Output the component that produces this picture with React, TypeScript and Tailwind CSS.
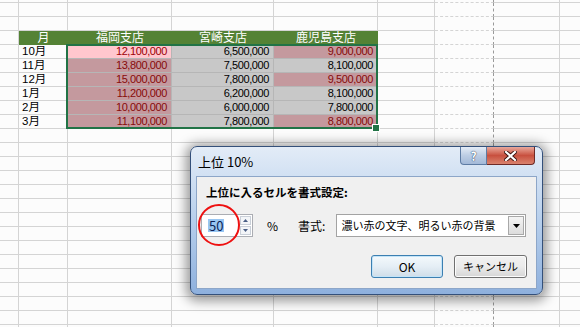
const COL_W = ['w-[19px]', 'w-[49px]', 'w-[104px]', 'w-[102px]', 'w-[104px]', 'w-[57px]', 'w-[59px]', 'w-[66px]', 'w-[40px]'];

type Cell = { v: string; hl: boolean };
type Row = { month: string; cells: Cell[] };

const headers = ['福岡支店', '宮崎支店', '鹿児島支店'];

const data: Row[] = [
  { month: '10月', cells: [{ v: '12,100,000', hl: true }, { v: '6,500,000', hl: false }, { v: '9,000,000', hl: true }] },
  { month: '11月', cells: [{ v: '13,800,000', hl: true }, { v: '7,500,000', hl: false }, { v: '8,100,000', hl: false }] },
  { month: '12月', cells: [{ v: '15,000,000', hl: true }, { v: '7,800,000', hl: false }, { v: '9,500,000', hl: true }] },
  { month: '1月', cells: [{ v: '11,200,000', hl: true }, { v: '6,200,000', hl: false }, { v: '8,100,000', hl: false }] },
  { month: '2月', cells: [{ v: '10,000,000', hl: true }, { v: '6,000,000', hl: false }, { v: '7,800,000', hl: false }] },
  { month: '3月', cells: [{ v: '11,100,000', hl: true }, { v: '7,800,000', hl: false }, { v: '8,800,000', hl: true }] },
];

const grid = 'border-r border-b border-[#d4d4d4]';

// column 6 ends on the page break
const emptyCell = (i: number) => (
  <div
    key={i}
    className={`${COL_W[i]} h-full shrink-0 ${
      i === 6 ? 'border-r border-b border-b-[#d4d4d4] border-r-[#9a9a9a] border-dashed border-b-solid' : grid
    }`}
  />
);

const EmptyRow = ({ h }: { h: string }) => (
  <div className={`flex ${h}`}>{COL_W.map((_, i) => emptyCell(i))}</div>
);

const HeaderRow = () => (
  <div className="flex h-[14px]">
    {emptyCell(0)}
    <div className={`${COL_W[1]} shrink-0 bg-[#548235] text-center text-[12px] leading-[14px] text-white`}>月</div>
    {headers.map((h, i) => (
      <div key={h} className={`${COL_W[i + 2]} shrink-0 bg-[#548235] text-center text-[12px] leading-[14px] text-white`}>
        {h}
      </div>
    ))}
    {[5, 6, 7, 8].map((i) => emptyCell(i))}
  </div>
);

const DataRow = ({ row, first }: { row: Row; first: boolean }) => (
  <div className="flex h-[14px]">
    {emptyCell(0)}
    <div className={`${COL_W[1]} shrink-0 ${grid} pl-[3px] text-[11.5px] leading-[13px] text-black`}>{row.month}</div>
    {row.cells.map((c, i) => {
      const active = first && i === 0;
      const bg = active ? 'bg-[#ffc7ce] text-[#9c0006]' : c.hl ? 'bg-[#c4999e] text-[#870a0a]' : 'bg-[#c8c8c8] text-black';
      return (
        <div
          key={i}
          className={`${COL_W[i + 2]} shrink-0 border-r border-b border-[#b6b6b6] ${bg} pr-[4px] text-right text-[11px] leading-[13px] tracking-[-0.4px]`}
        >
          {c.v}
        </div>
      );
    })}
    {[5, 6, 7, 8].map((i) => emptyCell(i))}
  </div>
);

const TitleButtons = () => (
  <div className="absolute right-[2px] top-0 flex">
    <div className="flex h-[18px] w-[27px] items-center justify-center rounded-bl-[4px] border border-t-0 border-[#5d7ba3] bg-gradient-to-b from-[#e4ecf6] via-[#bccde4] to-[#a3b9d8]">
      <span className="text-[12px] font-bold leading-none text-white [text-shadow:0_0_1px_#2a3f5f,0_0_1px_#2a3f5f]">?</span>
    </div>
    <div className="flex h-[18px] w-[48px] items-center justify-center rounded-br-[4px] border border-l-0 border-t-0 border-[#6e2a26] bg-gradient-to-b from-[#e8a89c] via-[#c8503f] to-[#d9826e]">
      <svg width="13" height="10" viewBox="0 0 13 10">
        <path d="M2 1 L11 9 M11 1 L2 9" stroke="#3b1410" strokeWidth="4" strokeLinecap="square" />
        <path d="M2 1 L11 9 M11 1 L2 9" stroke="#ffffff" strokeWidth="2.2" strokeLinecap="square" />
      </svg>
    </div>
  </div>
);

const Dialog = () => (
  <div className="absolute left-[190px] top-[146px] flex h-[149px] w-[353px] flex-col rounded-[7px] border border-[#34507a] bg-gradient-to-b from-[#e3ecf7] via-[#b7cfec] to-[#8eb0dd] px-[5px] pb-[5px] font-['Noto_Sans_CJK_JP',sans-serif] shadow-[0_2px_12px_4px_rgba(0,0,0,0.4)]">
    <div className="relative flex h-[29px] shrink-0 items-center pl-[2px] text-[13px] text-black">
      上位 10%
      <TitleButtons />
    </div>
    <div className="flex flex-1 flex-col border border-[#8da6c8] bg-[#f0f0f0] text-[11px] text-black">
      <div className="ml-[9px] mt-[7px] h-[16px] text-[11.5px] font-bold leading-[16px]">上位に入るセルを書式設定:</div>
      <div className="ml-[4px] mt-[14px] flex h-[23px] items-center">
        <div className="flex h-[23px] w-[52px] items-center border border-[#abadb3] bg-white">
          <div className="flex flex-1 pl-[6px]">
            <span className="bg-[#99c6f2] px-[1px] text-[13px] leading-[13px] text-[#0b1f55]">50</span>
          </div>
          <div className="mr-[1px] flex h-[19px] w-[11px] flex-col gap-[1px]">
            <div className="flex flex-1 items-center justify-center border border-[#c9cfd8] bg-[#f3f5f8]">
              <svg width="5" height="3" viewBox="0 0 5 3"><path d="M0 3 L2.5 0 L5 3 Z" fill="#4a5e85" /></svg>
            </div>
            <div className="flex flex-1 items-center justify-center border border-[#c9cfd8] bg-[#f3f5f8]">
              <svg width="5" height="3" viewBox="0 0 5 3"><path d="M0 0 L2.5 3 L5 0 Z" fill="#4a5e85" /></svg>
            </div>
          </div>
        </div>
        <span className="ml-[14px] text-[12px]">%</span>
        <span className="ml-[20px] text-[12px]">書式:</span>
        <div className="ml-[11px] flex h-[23px] w-[190px] items-center border border-[#a3a3a3] bg-white pl-[4px]">
          <span className="flex-1 text-[11px]">濃い赤の文字、明るい赤の背景</span>
          <div className="mr-[1px] flex h-[19px] w-[16px] items-center justify-center border border-[#a8a8a8] bg-gradient-to-b from-[#f4f4f4] to-[#dcdcdc]">
            <svg width="7" height="4" viewBox="0 0 7 4"><path d="M0 0 L7 0 L3.5 4 Z" fill="#000" /></svg>
          </div>
        </div>
      </div>
      <div className="mr-[9px] mt-[18px] flex justify-end gap-[11px]">
        <button className="flex h-[23px] w-[72px] items-center justify-center rounded-[3px] border border-[#3c7fb1] bg-gradient-to-b from-[#f4f9fc] via-[#e5eef5] to-[#cfdde8] text-[12px] shadow-[inset_0_0_0_1px_#c3e4f8]">
          OK
        </button>
        <button className="flex h-[23px] w-[73px] items-center justify-center rounded-[3px] border border-[#707070] bg-gradient-to-b from-[#f2f2f2] via-[#ebebeb] to-[#d6d6d6] text-[11px] shadow-[inset_0_0_0_1px_#fcfcfc]">
          キャンセル
        </button>
      </div>
    </div>
  </div>
);

export default function App() {
  return (
    <div className="relative h-[327px] w-[580px] overflow-hidden bg-[#fcfcfc] font-['Liberation_Sans','Noto_Sans_CJK_JP',sans-serif]">
      <div className="flex flex-col">
        <EmptyRow h="h-[3px]" />
        <EmptyRow h="h-[14px]" />
        <EmptyRow h="h-[14px]" />
        <HeaderRow />
        {data.map((r, i) => (
          <DataRow key={r.month} row={r} first={i === 0} />
        ))}
        {Array.from({ length: 15 }).map((_, i) => (
          <EmptyRow key={i} h="h-[14px]" />
        ))}
      </div>
      {/* selection frame + fill handle */}
      <div className="pointer-events-none absolute left-[66px] top-[44px] h-[85px] w-[312px] border-2 border-[#217346]" />
      <div className="absolute left-[373px] top-[125px] h-[6px] w-[6px] bg-[#217346] outline outline-1 outline-white" />
      <Dialog />
      <div className="pointer-events-none absolute left-[198px] top-[204px] h-[42px] w-[42px] rounded-full border-2 border-[#ee1111]" />
    </div>
  );
}
